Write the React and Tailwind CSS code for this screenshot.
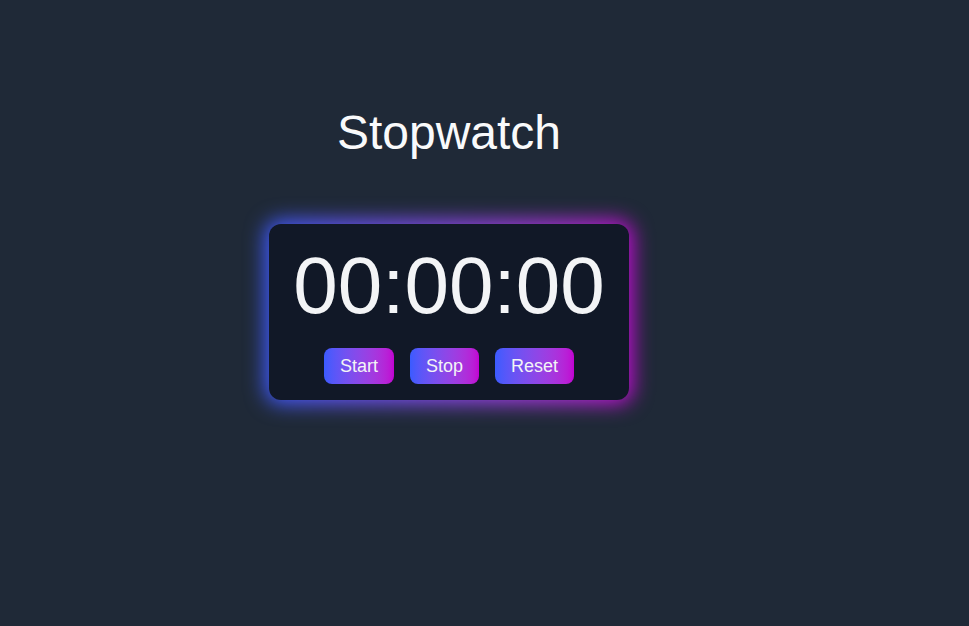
import React, { useState, useRef, useEffect } from "react";

const pad = (n) => String(n).padStart(2, "0");

const formatTime = (cs) => {
  const minutes = Math.floor(cs / 6000);
  const seconds = Math.floor((cs % 6000) / 100);
  const centis = cs % 100;
  return `${pad(minutes)}:${pad(seconds)}:${pad(centis)}`;
};

const ActionButton = ({ label, onClick }) => (
  <button
    onClick={onClick}
    className="h-9 px-4 rounded-lg bg-gradient-to-r from-[#3a5bff] to-[#c200d2] text-[18px] leading-7 text-[#f3f4f6] cursor-pointer"
  >
    {label}
  </button>
);

export default function App() {
  const [time, setTime] = useState(0);
  const [running, setRunning] = useState(false);
  const timerRef = useRef(null);

  useEffect(() => {
    if (running) {
      timerRef.current = setInterval(() => setTime((t) => t + 1), 10);
    }
    return () => clearInterval(timerRef.current);
  }, [running]);

  return (
    <div
      className="min-h-screen w-full bg-[#1f2937]"
      style={{ fontFamily: '"Liberation Sans", Arial, sans-serif' }}
    >
      <div className="w-[898px] flex flex-col items-center pt-[109px]">
        <h1 className="text-[48px] leading-[48px] text-[#f9fafb] mb-[67px]">
          Stopwatch
        </h1>
        <div className="relative">
          {/* glow behind the card */}
          <div className="absolute -inset-[4px] rounded-2xl bg-gradient-to-r from-[#3a5bff] to-[#c200d2] blur-[10px]" />
          <div className="relative w-[360px] rounded-xl bg-[#111827] p-4 flex flex-col items-center">
            <div className="text-[80px] leading-[92px] text-[#f3f4f6] mb-4">
              {formatTime(time)}
            </div>
            <div className="flex gap-4">
              <ActionButton label="Start" onClick={() => setRunning(true)} />
              <ActionButton label="Stop" onClick={() => setRunning(false)} />
              <ActionButton
                label="Reset"
                onClick={() => {
                  setRunning(false);
                  setTime(0);
                }}
              />
            </div>
          </div>
        </div>
      </div>
    </div>
  );
}
